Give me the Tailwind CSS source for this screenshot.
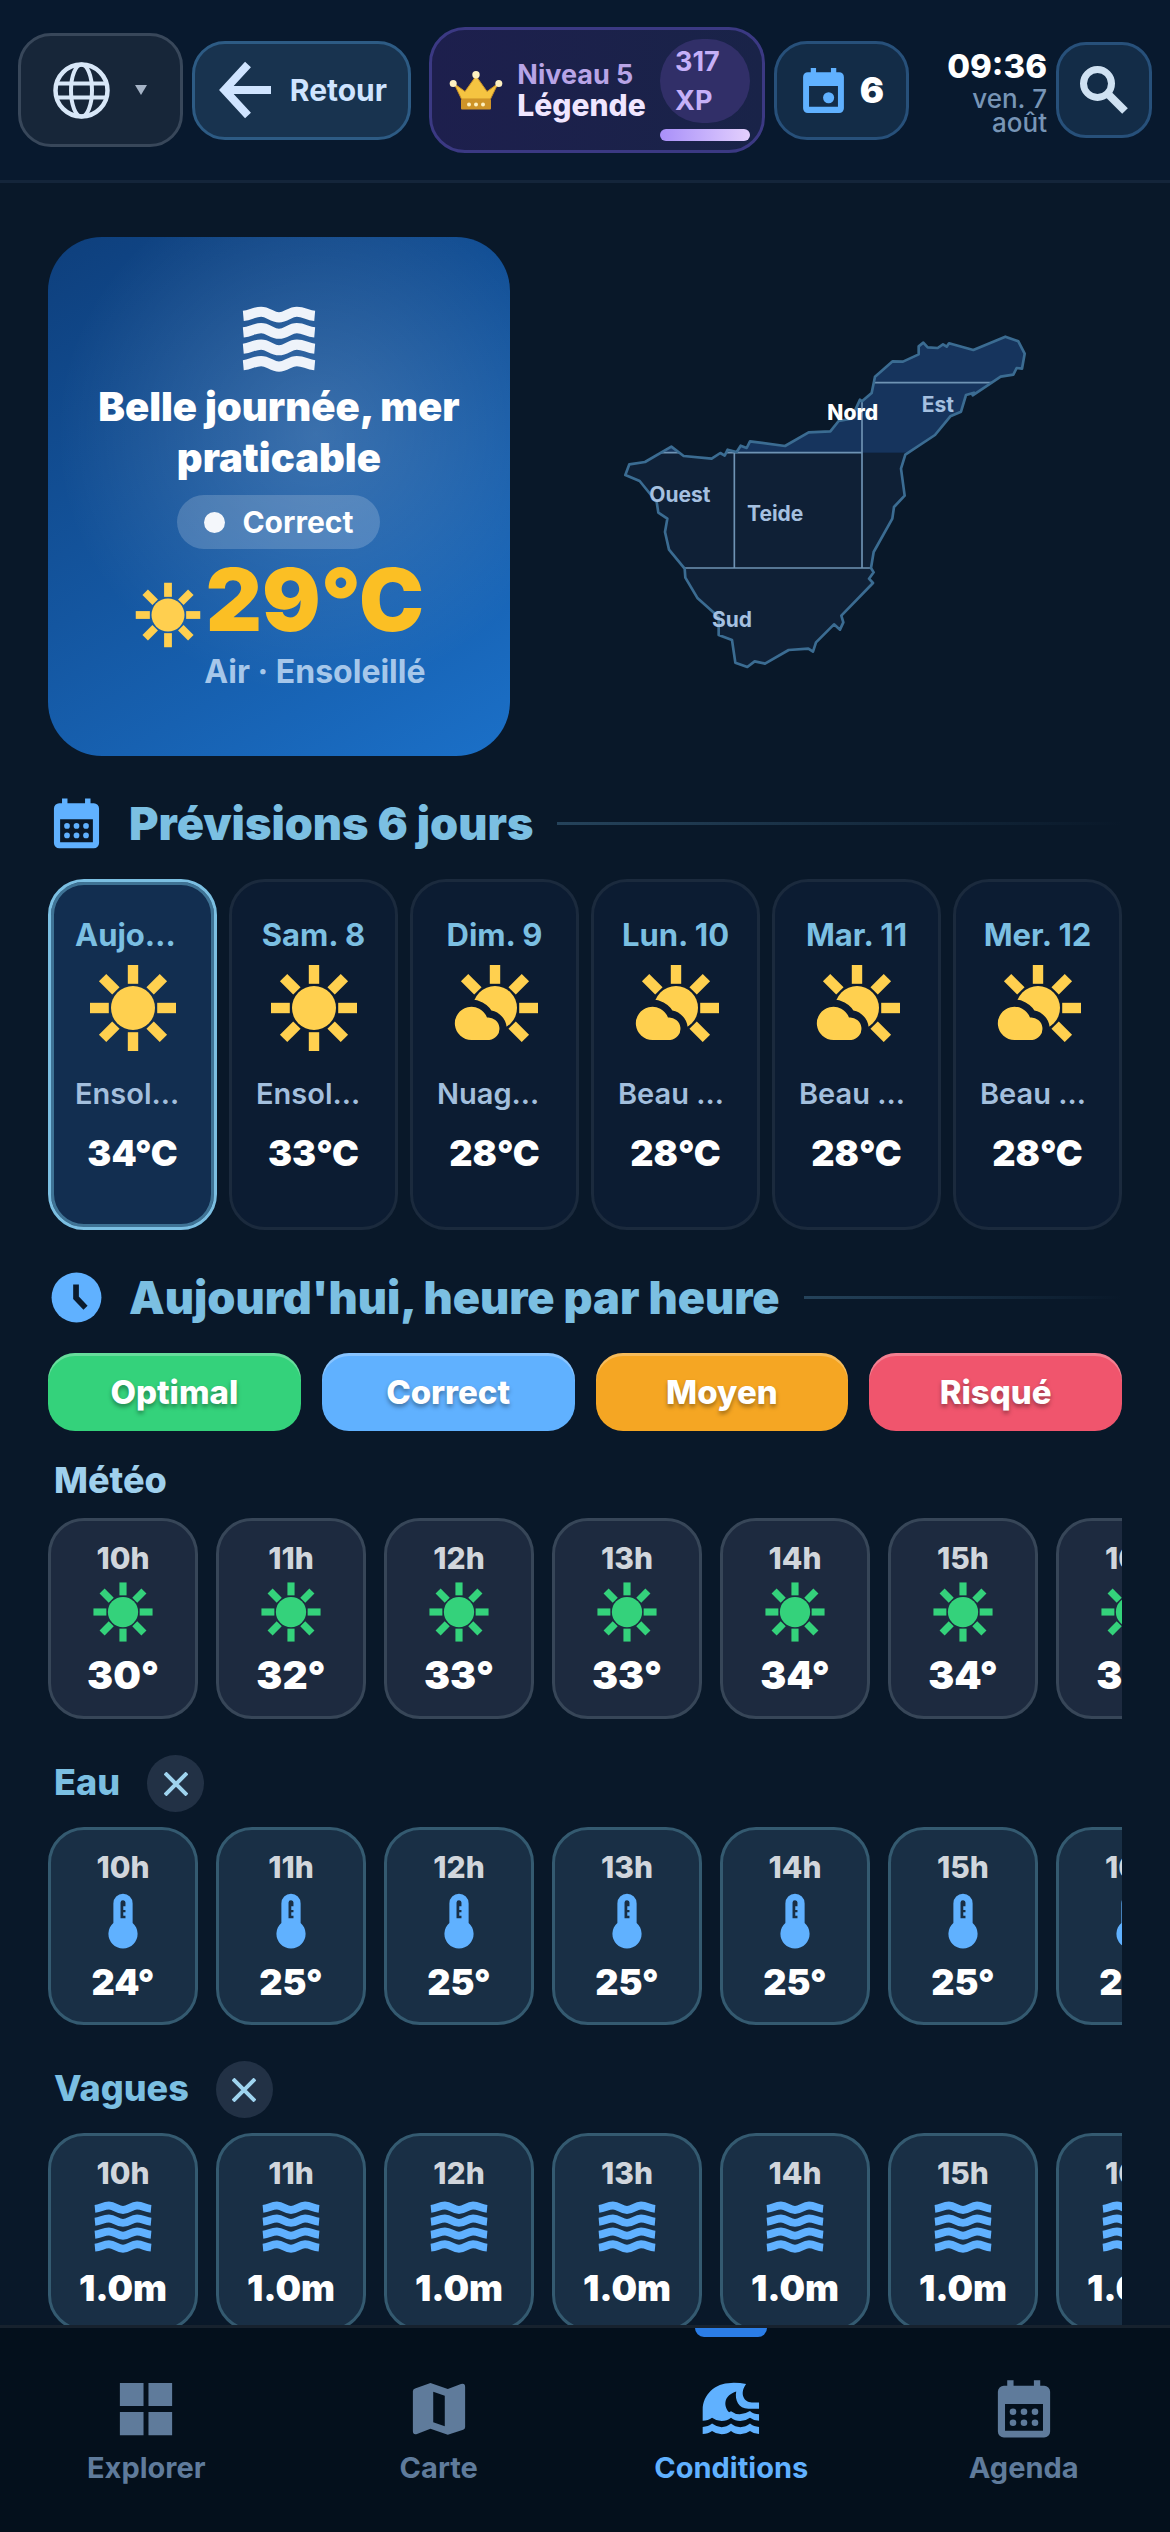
<!DOCTYPE html>
<html lang="fr">
  <head>
    <meta charset="UTF-8" />
    <meta name="viewport" content="width=device-width, initial-scale=1.0" />
    <title>Conditions</title>
    <script src="https://cdn.jsdelivr.net/npm/@tailwindcss/browser@4"></script>
  </head>
  <body
    class="flex h-screen flex-col overflow-hidden bg-[#091829] font-['Inter','Noto_Sans',sans-serif] text-white"
  >
    <!-- Icon sprite -->
    <svg class="absolute size-0" aria-hidden="true">
      <defs>
        <rect id="ray" x="10.7" y="1.25" width="2.6" height="4.7" />
        <mask id="cloudGap" maskUnits="userSpaceOnUse" x="0" y="0" width="24" height="24">
          <rect width="24" height="24" fill="#fff" />
          <path d="M6.1 20a4.15 4.15 0 1 1 3.9-5.6a2.8 2.8 0 1 1 .6 5.6z" fill="#000" stroke="#000" stroke-width="3.6" />
        </mask>
      </defs>
      <symbol id="sun" viewBox="0 0 24 24">
        <circle cx="12" cy="12" r="5.5" />
        <use href="#ray" />
        <use href="#ray" transform="rotate(45 12 12)" />
        <use href="#ray" transform="rotate(90 12 12)" />
        <use href="#ray" transform="rotate(135 12 12)" />
        <use href="#ray" transform="rotate(180 12 12)" />
        <use href="#ray" transform="rotate(225 12 12)" />
        <use href="#ray" transform="rotate(270 12 12)" />
        <use href="#ray" transform="rotate(315 12 12)" />
      </symbol>
      <symbol id="cloudy" viewBox="0 0 24 24">
        <circle cx="12" cy="12" r="5.5" mask="url(#cloudGap)" />
        <path d="M6.1 20a4.15 4.15 0 1 1 3.9-5.6a2.8 2.8 0 1 1 .6 5.6z" />
        <use href="#ray" />
        <use href="#ray" transform="rotate(45 12 12)" />
        <use href="#ray" transform="rotate(90 12 12)" />
        <use href="#ray" transform="rotate(135 12 12)" />
        <use href="#ray" transform="rotate(315 12 12)" />
      </symbol>
      <symbol id="waves" viewBox="0 0 24 24">
        <g fill="none" stroke="currentColor" stroke-width="2.9">
          <path d="M1.8 5.4C4 5.2 4.8 4.2 6.9 4.2S9.9 5.8 12 5.8s3-1.6 5.1-1.6s2.9 1 5.1 1.2" />
          <path d="M1.8 10.1C4 9.9 4.8 8.9 6.9 8.9s3 1.6 5.1 1.6s3-1.6 5.1-1.6s2.9 1 5.1 1.2" />
          <path d="M1.8 14.8c2.2-.2 3-1.2 5.1-1.2s3 1.6 5.1 1.6s3-1.6 5.1-1.6s2.9 1 5.1 1.2" />
          <path d="M1.8 19.5c2.2-.2 3-1.2 5.1-1.2s3 1.6 5.1 1.6s3-1.6 5.1-1.6s2.9 1 5.1 1.2" />
        </g>
      </symbol>
      <symbol id="thermo" viewBox="0 0 24 24">
        <path
          fill-rule="evenodd"
          d="M12 2.1a3.5 3.5 0 0 1 3.5 3.5v7.1a5.3 5.3 0 1 1-7 0V5.6A3.5 3.5 0 0 1 12 2.1zM11.1 5.3V11h1.8v-.9h-.8V8.8h.8V8h-.8V6.6h.8V5.4a.9.9 0 0 0-1.8-.1z"
        />
      </symbol>
      <symbol id="calendar" viewBox="0 0 24 24">
        <path
          fill-rule="evenodd"
          d="M5.9 1.5h2.3v2h7.4v-2h2.3v2h1.4a2.2 2.2 0 0 1 2.2 2.2v14.5a2.2 2.2 0 0 1-2.2 2.2H4.7a2.2 2.2 0 0 1-2.2-2.2V5.7a2.2 2.2 0 0 1 2.2-2.2h1.2zM5.1 10.2v9.7h13.8v-9.7z"
        />
        <circle cx="8" cy="13" r="1.2" />
        <circle cx="12" cy="13" r="1.2" />
        <circle cx="16" cy="13" r="1.2" />
        <circle cx="8" cy="17" r="1.2" />
        <circle cx="12" cy="17" r="1.2" />
        <circle cx="16" cy="17" r="1.2" />
      </symbol>
    </svg>

    <header class="flex h-[183px] shrink-0 items-center gap-[9px] border-b-[3px] border-[#14253a] bg-[#08192e] px-[18px]">
      <button
        aria-label="Langue"
        class="flex h-[114px] w-[165px] shrink-0 items-center justify-between rounded-[33px] border-[3px] border-[#38475a] bg-[#172639] pr-[33px] pl-8"
      >
        <svg class="size-[57px] text-[#d8e7f8]" viewBox="0 0 57 57" fill="none" stroke="currentColor" stroke-width="4">
          <circle cx="28.5" cy="28.5" r="26" stroke-width="4.5" />
          <ellipse cx="28.5" cy="28.5" rx="10.5" ry="26" />
          <path d="M3.5 21.5h50M3.5 35.5h50" />
        </svg>
        <svg class="h-[10px] w-3 fill-[#a5b3c6]" viewBox="0 0 12 10"><path d="M0 0h12L6 10z" /></svg>
      </button>
      <button
        class="mr-[9px] flex h-[99px] w-[219px] shrink-0 items-center justify-between rounded-[33px] border-[3px] border-[#2d5b84] bg-[#18334f] pr-[21px] pl-6 text-[30px] font-bold text-[#cfe4ff]"
      >
        <svg class="h-[58px] w-[52px]" viewBox="0 0 52 58" fill="none" stroke="currentColor" stroke-width="8">
          <path d="M29 3.5L5.5 29L29 54.5M5 29h47" />
        </svg>
        Retour
      </button>
      <button
        class="flex h-[126px] w-[336px] shrink-0 items-center justify-between rounded-[36px] border-[3px] border-[#3b3983] bg-linear-to-r from-[#1d1f4d] to-[#192348] pr-3 pl-[17px] text-left"
      >
        <svg class="h-[39px] w-[54px]" viewBox="0 0 54 39">
          <path d="M5 12.5L12.5 28h29L49 12.5L38 20.5L27 5L16 20.5z" fill="#f5c441" stroke="#c98f27" stroke-width="1" />
          <rect x="12" y="28" width="30" height="10.5" rx="1" fill="#cf9428" />
          <g fill="#fdf0c0">
            <circle cx="4.2" cy="12.5" r="3.5" />
            <circle cx="27" cy="3.8" r="3.7" />
            <circle cx="49.8" cy="12.5" r="3.5" />
            <circle cx="20" cy="33.5" r="2" />
            <circle cx="27" cy="33.5" r="2" />
            <circle cx="34" cy="33.5" r="2" />
          </g>
        </svg>
        <span class="flex flex-col">
          <span class="text-[27px] leading-[30px] font-bold text-[#b8a4e6]">Niveau 5</span>
          <span class="text-[30px] leading-[30px] font-extrabold text-[#f0e6ff]">Légende</span>
        </span>
        <span class="flex w-[90px] flex-col gap-[6px]">
          <span class="flex h-[84px] items-center rounded-full bg-[#312f68] px-[15px] text-[27px] leading-[39px] font-bold text-[#c6b0f8]">317<br />XP</span>
          <span class="h-3 rounded-full bg-linear-to-r from-[#a98ff8] to-[#e4d0fd]"></span>
        </span>
      </button>
      <button
        class="flex h-[99px] w-[135px] shrink-0 items-center justify-between rounded-[33px] border-[3px] border-[#27507a] bg-[#132c47] pr-[22px] pl-[21px] text-[36px] font-black"
      >
        <svg class="size-[51px] fill-[#60b1ff]" viewBox="0 0 24 24">
          <path
            fill-rule="evenodd"
            d="M6 1.4h2.5v2h7v-2H18v2h1.4a2.2 2.2 0 0 1 2.2 2.2v14.8a2.2 2.2 0 0 1-2.2 2.2H4.6a2.2 2.2 0 0 1-2.2-2.2V5.6a2.2 2.2 0 0 1 2.2-2.2H6zM5.2 9.9v9.7h13.6V9.9z"
          />
          <circle cx="14.4" cy="15.4" r="2.6" />
        </svg>
        6
      </button>
      <div class="flex flex-1 flex-col items-end text-right">
        <span class="text-[33px] leading-[42px] font-extrabold">09:36</span>
        <span class="w-24 text-[26px] leading-6 font-medium text-[#7795b6]">ven. 7 août</span>
      </div>
      <button
        aria-label="Rechercher"
        class="flex size-24 shrink-0 items-center justify-center rounded-[30px] border-[3px] border-[#27507a] bg-[#132c47]"
      >
        <svg class="size-12 text-[#cfe1f2]" viewBox="0 0 48 48" fill="none" stroke="currentColor" stroke-width="7">
          <circle cx="17.5" cy="17.5" r="14" />
          <path d="M27 27L45 45" stroke-width="8" />
        </svg>
      </button>
    </header>

    <main class="flex-1 overflow-hidden px-12 pt-[54px]">
      <section class="flex items-center gap-6">
        <div
          class="flex h-[519px] w-[43%] shrink-0 flex-col items-center rounded-[54px] bg-[radial-gradient(circle_at_58%_38%,rgba(255,255,255,0.17),transparent_62%),linear-gradient(150deg,#0e3f7c,#1456a0_50%,#1b70c8)] pt-[60px] text-center"
        >
          <svg class="size-[84px] text-[#eef3fa]"><use href="#waves" /></svg>
          <h1 class="text-[40px] leading-[51px] font-black">Belle journée, mer<br />praticable</h1>
          <span class="mt-3 flex h-[54px] items-center gap-[17px] rounded-full bg-white/18 px-[27px] text-[30px] font-bold">
            <span class="size-[21px] rounded-full bg-[#f4f7fb]"></span>Correct
          </span>
          <div class="mt-[6px] flex items-start">
            <svg class="mt-6 size-[72px] fill-[#ffcf4f]"><use href="#sun" /></svg>
            <div class="flex flex-col">
              <span class="text-[87px] leading-[90px] font-black text-[#fbbf24]">29°C</span>
              <span class="mt-[9px] text-[32px] leading-9 font-bold text-[#a6c7ea]">Air · Ensoleillé</span>
            </div>
          </div>
        </div>

        <div class="flex flex-1 justify-center">
          <svg class="w-[460px]" viewBox="0 0 1380 1170" role="img" aria-label="Carte des zones">
            <defs>
              <clipPath id="island">
                <path
                  id="coast"
                  d="M82 519L94 487L141 480L220 434L257 462L341 470L367 453L380 461L389 443L416 450L428 431L446 438L456 418L561 432L632 391L697 388L722 357L760 350L786 293L792 298L821 273L831 224L884 178L915 179L962 157V133L976 122L989 136L1019 138L1035 127L1046 134L1053 124L1126 144L1222 104L1261 118L1280 155L1272 200L1256 198L1246 218L1208 224L1124 280L1128 272L1104 279L1089 329L1057 343L1011 399L922 458L909 500L920 581L888 615L883 650L827 750L819 798L827 811L813 830L825 843L730 941L736 961L726 983L708 967L654 1021L645 1049L631 1040L572 1044L501 1085L470 1078L448 1095L412 1082L402 1014L362 999V945L299 889L262 827L260 800L213 743L201 690L208 650L181 632L176 600L125 537z"
                />
              </clipPath>
            </defs>
            <g clip-path="url(#island)">
              <rect width="1380" height="1170" fill="#0f2036" />
              <rect width="1380" height="452" fill="#16345d" />
              <path d="M0 452H792M0 798H900M831 242H1190M409 452V798M792 290V798" fill="none" stroke="#6f93b4" stroke-width="5" />
            </g>
            <use href="#coast" fill="none" stroke="#3b6c92" stroke-width="8" stroke-linejoin="round" />
            <g class="fill-[#a5c0e0] text-[63px] font-bold">
              <text x="154" y="600">Ouest</text>
              <text x="447" y="657">Teide</text>
              <text x="971" y="330">Est</text>
              <text x="342" y="975">Sud</text>
              <text x="688" y="354" class="fill-white font-extrabold">Nord</text>
            </g>
          </svg>
        </div>
      </section>

      <section>
        <div class="mt-[39px] mb-[27px] flex h-[57px] items-center gap-6">
          <svg class="size-[57px] shrink-0 fill-[#60b1ff]"><use href="#calendar" /></svg>
          <h2 class="text-[45px] font-black text-[#7bbfe2]">Prévisions 6 jours</h2>
          <span class="h-[3px] flex-1 bg-linear-to-r from-[#25435b] to-transparent"></span>
        </div>
        <div id="days" class="grid grid-cols-6 gap-3"></div>
      </section>

      <section>
        <div class="mt-[39px] mb-[27px] flex h-[57px] items-center gap-6">
          <svg class="size-[57px] shrink-0" viewBox="0 0 24 24">
            <circle cx="12" cy="12" r="10.5" fill="#60b1ff" />
            <path d="M11.8 6.5v5.6l4 4.2" fill="none" stroke="#0a1a2c" stroke-width="2.4" />
          </svg>
          <h2 class="text-[45px] font-black text-[#7bbfe2]">Aujourd'hui, heure par heure</h2>
          <span class="h-[3px] flex-1 bg-linear-to-r from-[#25435b] to-transparent"></span>
        </div>
        <ul class="grid grid-cols-4 gap-[21px] text-center text-[33px] leading-[78px] font-extrabold text-shadow-[0_3px_4px_rgb(0_0_0/0.35)]">
          <li class="rounded-[27px] bg-[#34d27b] inset-shadow-[0_3px_0_rgb(255_255_255/0.25)]">Optimal</li>
          <li class="rounded-[27px] bg-[#60b1ff] inset-shadow-[0_3px_0_rgb(255_255_255/0.25)]">Correct</li>
          <li class="rounded-[27px] bg-[#f5a623] inset-shadow-[0_3px_0_rgb(255_255_255/0.25)]">Moyen</li>
          <li class="rounded-[27px] bg-[#f0556d] inset-shadow-[0_3px_0_rgb(255_255_255/0.25)]">Risqué</li>
        </ul>

        <h3 class="mt-[27px] mb-[15px] pl-[6px] text-[36px] leading-[45px] font-extrabold text-[#9fd0ed]">Météo</h3>
        <div id="meteo" class="flex gap-[18px] overflow-hidden"></div>

        <div class="mt-9 mb-[15px] flex h-[57px] items-center gap-[27px] pl-[6px]">
          <h3 class="pb-1 text-[36px] font-extrabold text-[#7bbfe2]">Eau</h3>
          <button aria-label="Fermer Eau" class="flex size-[57px] items-center justify-center rounded-full bg-[#223145]">
            <svg class="size-6 stroke-[#9fd4ef]" viewBox="0 0 24 24" stroke-width="4"><path d="M1 1L23 23M23 1L1 23" /></svg>
          </button>
        </div>
        <div id="eau" class="flex gap-[18px] overflow-hidden"></div>

        <div class="mt-9 mb-[15px] flex h-[57px] items-center gap-[27px] pl-[6px]">
          <h3 class="pb-1 text-[36px] font-extrabold text-[#7bbfe2]">Vagues</h3>
          <button aria-label="Fermer Vagues" class="flex size-[57px] items-center justify-center rounded-full bg-[#223145]">
            <svg class="size-6 stroke-[#9fd4ef]" viewBox="0 0 24 24" stroke-width="4"><path d="M1 1L23 23M23 1L1 23" /></svg>
          </button>
        </div>
        <div id="vagues" class="flex gap-[18px] overflow-hidden"></div>
      </section>
    </main>

    <nav class="grid h-[207px] shrink-0 grid-cols-4 border-t-[3px] border-[#17222e] bg-[#04101c] text-[29px] leading-9 font-bold text-[#5f7b9b]">
      <a href="#" class="flex flex-col items-center gap-2 pt-12">
        <svg class="size-[66px] fill-current" viewBox="0 0 24 24">
          <path d="M2.5 2.5h8.6v8.4H2.5zM12.9 2.5h8.6v8.4h-8.6zM2.5 13.1h8.6v8.4H2.5zM12.9 13.1h8.6v8.4h-8.6z" />
        </svg>
        Explorer
      </a>
      <a href="#" class="flex flex-col items-center gap-2 pt-12">
        <svg class="size-[66px] fill-current" viewBox="0 0 24 24">
          <path
            fill-rule="evenodd"
            d="M3.3 4.5L8.9 2.5L15.2 4.7L20 2.9Q21.5 2.5 21.5 4V18.5Q21.5 19.2 20.8 19.5L15.2 21.4L8.9 19.2L4 21.1Q2.5 21.5 2.5 20V5.5Q2.5 4.8 3.3 4.5zM9.9 5.7V16.85L14.1 18.3V7.15z"
          />
        </svg>
        Carte
      </a>
      <a href="#" aria-current="page" class="relative flex flex-col items-center gap-2 pt-12 text-[#60b1ff]">
        <span class="absolute top-0 h-[9px] w-[72px] rounded-b-[9px] bg-[#2b7de6]"></span>
        <svg class="size-[66px] fill-current" viewBox="0 0 24 24">
          <path
            d="M1.7 16.3V12.2C1.7 6.8 6.2 2.5 12 2.5Q15 2.4 17.5 2.9C15 6.2 16.6 9.6 19.6 9.6H22.2V11.9H18.3C14.7 11.8 13.3 8.6 13.9 5.6C9.6 7 9 10.4 11.3 13.2L12 12.8Q13.4 13.9 15.2 13.9T18.9 12.7Q20.2 13.9 22.2 13.9V16.3Q20.3 16.3 18.9 15.2Q17.3 16.4 15.4 16.4T12 15.2Q10.5 16.4 8.6 16.4T5.1 15.2Q3.7 16.3 1.7 16.3z"
          />
          <path
            d="M1.7 18.5Q3.7 18.5 5.1 17.3Q6.8 18.6 8.6 18.6T12 17.3Q13.5 18.6 15.4 18.6T18.9 17.3Q20.3 18.5 22.2 18.5V21.1Q20.3 21.1 18.9 20Q17.3 21.2 15.4 21.2T12 20Q10.5 21.2 8.6 21.2T5.1 20Q3.7 21.1 1.7 21.1z"
          />
        </svg>
        Conditions
      </a>
      <a href="#" class="flex flex-col items-center gap-2 pt-12">
        <svg class="size-[66px] fill-current"><use href="#calendar" /></svg>
        Agenda
      </a>
    </nav>

    <script>
      const days = [
        { label: "Aujourd'hui", icon: "sun", sky: "Ensoleillé", temp: 34, active: true },
        { label: "Sam. 8", icon: "sun", sky: "Ensoleillé", temp: 33 },
        { label: "Dim. 9", icon: "cloudy", sky: "Nuageux", temp: 28 },
        { label: "Lun. 10", icon: "cloudy", sky: "Beau temps", temp: 28 },
        { label: "Mar. 11", icon: "cloudy", sky: "Beau temps", temp: 28 },
        { label: "Mer. 12", icon: "cloudy", sky: "Beau temps", temp: 28 },
      ];

      const hours = ["10h", "11h", "12h", "13h", "14h", "15h", "16h"];
      const meteo = ["30°", "32°", "33°", "33°", "34°", "34°", "34°"];
      const eau = ["24°", "25°", "25°", "25°", "25°", "25°", "25°"];
      const vagues = ["1.0m", "1.0m", "1.0m", "1.0m", "1.0m", "1.0m", "1.0m"];

      document.getElementById("days").innerHTML = days
        .map(
          (day) => `
            <button class="flex h-[351px] min-w-0 flex-col items-center rounded-[36px] border-[3px] px-6 pt-[33px] ${
              day.active
                ? "border-[#7bbfe2] bg-[#122e50] inset-ring-3 inset-ring-[#3f7395]"
                : "border-[#1b2a3d] bg-[#0c1c32]"
            }">
              <span class="max-w-full truncate text-[31px] leading-[39px] font-bold text-[#7bbfe2]">${day.label}</span>
              <svg class="mt-[6px] size-24 shrink-0 fill-[#ffd04f]"><use href="#${day.icon}" /></svg>
              <span class="mt-[18px] max-w-full truncate text-[29px] leading-[39px] font-semibold text-[#a3bfdd]">${day.sky}</span>
              <span class="mt-[15px] text-[36px] leading-[51px] font-black">${day.temp}°C</span>
            </button>`
        )
        .join("");

      function renderHours(id, values, icon, cardClass, iconClass, valueClass) {
        document.getElementById(id).innerHTML = hours
          .map(
            (hour, i) => `
              <div class="flex w-[150px] shrink-0 flex-col items-center gap-[3px] rounded-[36px] border-[3px] pt-[19px] pb-[14px] ${cardClass}">
                <span class="text-[30px] leading-9 font-extrabold text-[#d1d6dc]">${hour}</span>
                <svg class="size-[66px] ${iconClass}"><use href="#${icon}" /></svg>
                <span class="font-black ${valueClass}">${values[i]}</span>
              </div>`
          )
          .join("");
      }

      renderHours("meteo", meteo, "sun", "border-[#374658] bg-[#1d2a3f]", "fill-[#34d27b]", "text-[39px] leading-[54px]");
      renderHours("eau", eau, "thermo", "border-[#345a70] bg-[#192f45]", "fill-[#60b1ff]", "text-[36px] leading-[51px]");
      renderHours("vagues", vagues, "waves", "border-[#345a70] bg-[#192f45]", "text-[#60b1ff]", "text-[36px] leading-[51px]");
    </script>
  </body>
</html>
